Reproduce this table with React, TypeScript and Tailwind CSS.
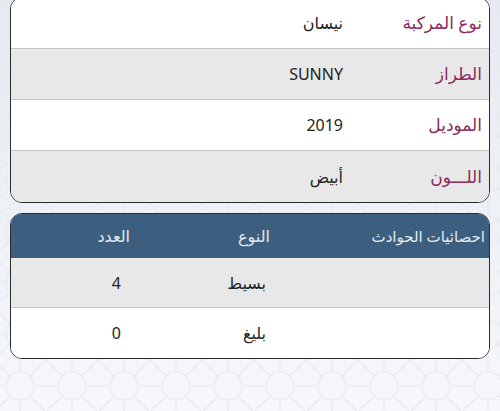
import React from "react";

const font = { fontFamily: '"Noto Sans", "DejaVu Sans", sans-serif' };

function Background() {
  return (
    <svg className="absolute inset-0 w-full h-full" width="500" height="411">
      <defs>
        <linearGradient id="bgg" x1="0" y1="0" x2="0" y2="1">
          <stop offset="0" stopColor="#e6eaf0" />
          <stop offset="1" stopColor="#f5f7fa" />
        </linearGradient>
        <pattern id="geo" width="52" height="52" patternUnits="userSpaceOnUse" x="-6" y="-4">
          <g fill="none" stroke="#e5e9ef" strokeWidth="1.2">
            <circle cx="26" cy="26" r="14" />
            <path d="M0 0 L16 16 M52 0 L36 16 M0 52 L16 36 M52 52 L36 36" />
            <path d="M26 0 L26 12 M26 40 L26 52 M0 26 L12 26 M40 26 L52 26" />
          </g>
        </pattern>
      </defs>
      <rect width="500" height="411" fill="url(#bgg)" />
      <rect width="500" height="411" fill="url(#geo)" />
    </svg>
  );
}

const infoRows = [
  { label: "نوع المركبة", value: "نيسان", bg: "bg-white" },
  { label: "الطراز", value: "SUNNY", bg: "bg-[#e8e8e8]" },
  { label: "الموديل", value: "2019", bg: "bg-white" },
  { label: "اللـــون", value: "أبيض", bg: "bg-[#e8e8e8]" },
];

const stats = [
  { type: "بسيط", count: "4", bg: "bg-[#e8e8e8]" },
  { type: "بليغ", count: "0", bg: "bg-white" },
];

export default function App() {
  return (
    <div
      dir="rtl"
      className="relative w-[500px] h-[411px] overflow-hidden text-[16px]"
      style={font}
    >
      <Background />
      <div className="relative flex flex-col px-[10px]">
        <div className="-mt-[3px] border-[1.5px] border-[#2b2b2b] rounded-[12px] overflow-hidden bg-white">
          {infoRows.map((r, i) => (
            <div
              key={i}
              className={`flex items-center h-[51px] px-[7px] ${r.bg} ${
                i < infoRows.length - 1 ? "border-b border-[#c4c4c4]" : ""
              }`}
            >
              <div className="w-[132px] text-[17px] text-[#8b2a5e]">{r.label}</div>
              <div className="pr-[7px] text-[#222]">{r.value}</div>
            </div>
          ))}
        </div>

        <div className="mt-[10px] border-[1.5px] border-[#2b2b2b] rounded-[12px] overflow-hidden bg-white">
          <div className="flex items-center h-[44px] bg-[#3d5f7f] text-[#e4eaf0]">
            <div className="w-[213px] pr-[4px] text-[15px]">احصائيات الحوادث</div>
            <div className="w-[140px] pr-[6px]">النوع</div>
            <div className="flex-1 pr-[6px]">العدد</div>
          </div>
          {stats.map((s, i) => (
            <div
              key={i}
              className={`flex items-center h-[50px] ${s.bg} ${
                i < stats.length - 1 ? "border-b border-[#c4c4c4]" : ""
              } text-[#222]`}
            >
              <div className="w-[213px]" />
              <div className="w-[140px] pr-[10px]">{s.type}</div>
              <div className="flex-1 pr-[15px]">{s.count}</div>
            </div>
          ))}
        </div>
      </div>
    </div>
  );
}
